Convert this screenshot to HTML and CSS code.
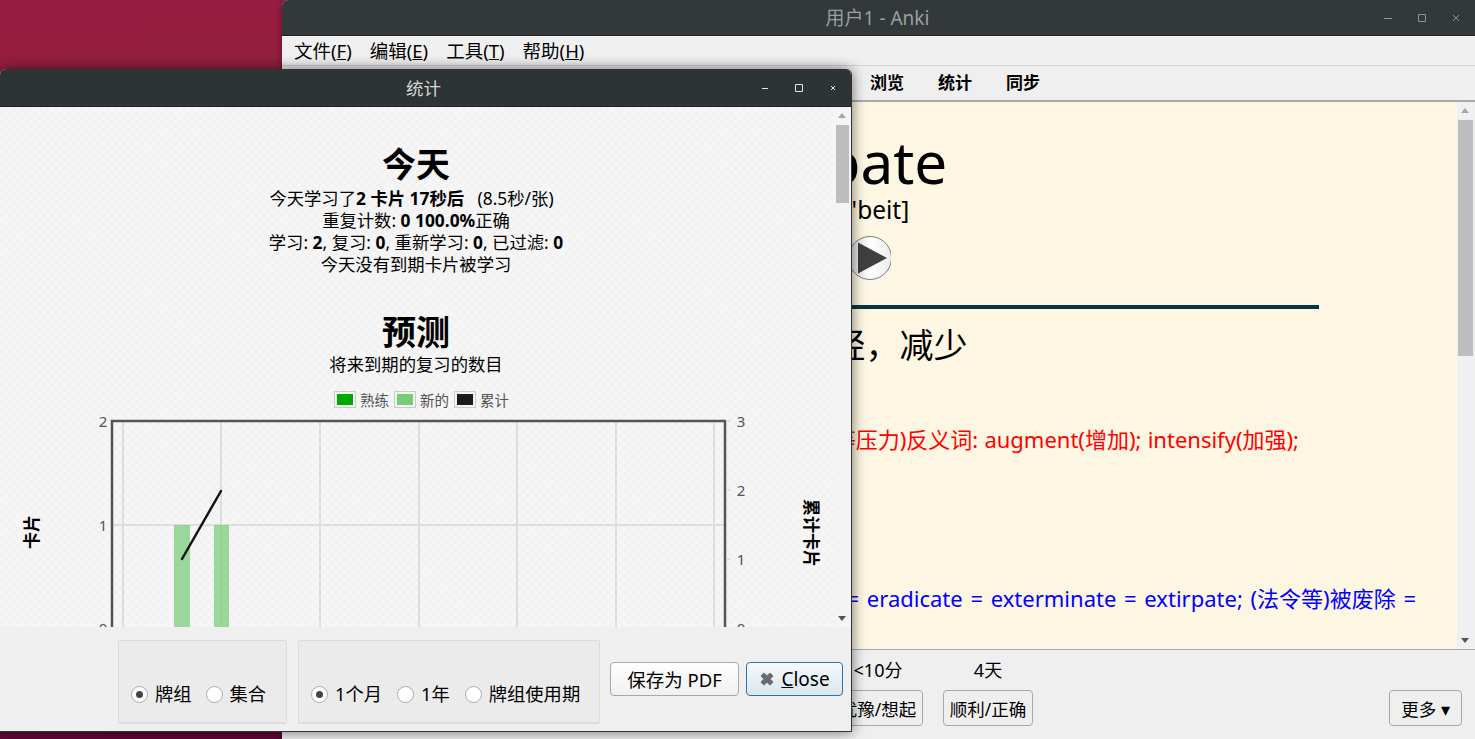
FILE: index.html
```html
<!DOCTYPE html>
<html lang="zh-CN">
<head>
    <meta charset="UTF-8">
    <meta name="viewport" content="width=device-width, initial-scale=1.0">
    <title>Anki</title>
    <link rel="stylesheet" href="styles.css">
</head>
<body>
    <!-- Main Anki window -->
    <div class="window main-window">
        <div class="titlebar main-titlebar">
            <span class="title">用户1 - Anki</span>
            <div class="win-buttons main-buttons">
                <svg width="8" height="8" viewBox="0 0 8 8"><path d="M0 4.500h8" stroke="currentColor" fill="none"/></svg>
                <svg width="8" height="8" viewBox="0 0 8 8"><path d="M.5.5h7v7h-7z" stroke="currentColor" fill="none"/></svg>
                <svg width="8" height="8" viewBox="0 0 8 8"><path d="M1 1l6 6M7 1l-6 6" stroke="currentColor" fill="none"/></svg>
            </div>
        </div>
        <div class="menubar">
            <span>文件(<u>F</u>)</span>
            <span>编辑(<u>E</u>)</span>
            <span>工具(<u>T</u>)</span>
            <span>帮助(<u>H</u>)</span>
        </div>
        <div class="toolbar">
            <span>牌组</span>
            <span>添加</span>
            <span>浏览</span>
            <span>统计</span>
            <span>同步</span>
        </div>
        <div class="card-area">
            <div class="card">
                <div class="word">abate</div>
                <div class="phonetic">[ə'beit]</div>
                <div class="play">
                    <svg width="42" height="46" viewBox="0 0 42 46">
                        <defs>
                            <linearGradient id="playFill" x1="0" x2="1" y1="0" y2="0">
                                <stop offset="0" stop-color="#d8d8d8"/>
                                <stop offset="0.5" stop-color="#ffffff"/>
                                <stop offset="1" stop-color="#ececec"/>
                            </linearGradient>
                        </defs>
                        <circle cx="21" cy="23" r="21.500" fill="url(#playFill)" stroke="#7d7d7d"/>
                        <path d="M9 7.500L38 23L9 38.500z" fill="#404040"/>
                    </svg>
                </div>
                <hr class="divider">
                <div class="meaning">v. 减轻，减少</div>
                <div class="example red">(痛苦等压力)反义词: augment(增加); intensify(加强);</div>
                <div class="example blue">消灭 = eradicate = exterminate = extirpate; (法令等)被废除 =</div>
            </div>
            <div class="scrollbar main-scroll">
                <i class="arrow-up"></i>
                <div class="thumb"></div>
                <i class="arrow-down"></i>
            </div>
        </div>
        <div class="answer-bar">
            <div></div>
            <div class="answers">
                <div class="answer"><span class="due">&lt;1分</span><button class="btn">重来/忘记</button></div>
                <div class="answer"><span class="due">&lt;10分</span><button class="btn">犹豫/想起</button></div>
                <div class="answer"><span class="due">4天</span><button class="btn">顺利/正确</button></div>
            </div>
            <div class="more-wrap"><button class="btn more">更多 ▾</button></div>
        </div>
    </div>

    <!-- Statistics dialog -->
    <div class="window stats-window">
        <div class="titlebar stats-titlebar">
            <span class="title">统计</span>
            <div class="win-buttons stats-buttons">
                <svg width="8" height="8" viewBox="0 0 8 8"><path d="M1 4.500h6" stroke="currentColor" fill="none"/></svg>
                <svg width="8" height="8" viewBox="0 0 8 8"><path d="M.5.5h7v7h-7z" stroke="currentColor" stroke-width="1" fill="none"/></svg>
                <svg width="8" height="8" viewBox="0 0 8 8"><path d="M2 2l4 4M6 2l-4 4" stroke="currentColor" fill="none"/></svg>
            </div>
        </div>
        <div class="stats-view">
            <div class="stats-page">
                <h1>今天</h1>
                <p>今天学习了<b>2 卡片 17秒后</b>&nbsp;&nbsp;&nbsp;(8.5秒/张)&nbsp;&nbsp;</p>
                <p>重复计数: <b>0 100.0%</b>正确</p>
                <p>学习: <b>2</b>, 复习: <b>0</b>, 重新学习: <b>0</b>, 已过滤: <b>0</b></p>
                <p>今天没有到期卡片被学习</p>
                <h1 class="second">预测</h1>
                <p>将来到期的复习的数目</p>
                <div class="legend">
                    <span class="swatch"><i class="mature"></i></span><span>熟练</span>
                    <span class="swatch"><i class="young"></i></span><span>新的</span>
                    <span class="swatch"><i class="total"></i></span><span>累计</span>
                </div>
                <svg class="chart" width="832" height="230" viewBox="0 0 832 230">
                    <g class="grid">
                        <path d="M123 21V230M221 21V230M320 21V230M419 21V230M517 21V230M616 21V230M714 21V230M113 125H724"/>
                    </g>
                    <rect class="bar" x="174" y="125" width="16" height="105"/>
                    <rect class="bar" x="214" y="125" width="15" height="105"/>
                    <path class="frame" d="M112 230V21H725V230"/>
                    <path class="ticks" d="M726 90h5M726 159h5M726 21h5"/>
                    <path class="cumulative" d="M182 159L221 91"/>
                    <g class="axis-text">
                        <text x="103" y="27" text-anchor="middle">2</text>
                        <text x="103" y="131" text-anchor="middle">1</text>
                        <text x="103" y="234" text-anchor="middle">0</text>
                        <text x="741" y="27" text-anchor="middle">3</text>
                        <text x="741" y="96" text-anchor="middle">2</text>
                        <text x="741" y="165" text-anchor="middle">1</text>
                        <text x="741" y="234" text-anchor="middle">0</text>
                    </g>
                    <text class="axis-title" transform="translate(38 132) rotate(-90)" text-anchor="middle">卡片</text>
                    <text class="axis-title" transform="translate(805 133) rotate(90)" text-anchor="middle">累计卡片</text>
                </svg>
            </div>
            <div class="scrollbar stats-scroll">
                <i class="arrow-up"></i>
                <div class="thumb"></div>
                <i class="arrow-down"></i>
            </div>
        </div>
        <div class="stats-footer">
            <div class="group group-scope">
                <label class="radio"><i class="dot on"></i>牌组</label>
                <label class="radio"><i class="dot"></i>集合</label>
            </div>
            <div class="group group-range">
                <label class="radio"><i class="dot on"></i>1个月</label>
                <label class="radio"><i class="dot"></i>1年</label>
                <label class="radio"><i class="dot"></i>牌组使用期</label>
            </div>
            <button class="btn save-btn">保存为 PDF</button>
            <button class="btn close-btn">
                <svg width="16" height="16" viewBox="0 0 16 16"><path d="M2.500 5L5 2.500L8 5.500L11 2.500L13.500 5L10.500 8L13.500 11L11 13.500L8 10.500L5 13.500L2.500 11L5.500 8z" fill="#6a6a6a" stroke="#6a6a6a" stroke-width="1.500" stroke-linejoin="round"/></svg>
                <span><u>C</u>lose</span>
            </button>
        </div>
    </div>
</body>
</html>
```

FILE: styles.css
```css
html, body {
    height: 100%;
}

body {
    margin: 0;
    overflow: hidden;
    position: relative;
    font-family: "Noto Sans", "Noto Sans CJK SC", sans-serif;
    color: #000;
    background: linear-gradient(175deg, #981b43 0%, #93203c 12%, #5a0536 95%);
}

.window {
    position: absolute;
    display: flex;
    flex-direction: column;
    background-color: #efefef;
}

.main-window {
    left: 282px;
    top: 0;
    width: 1193px;
    height: 739px;
    border-radius: 6px 0 0 0;
    overflow: hidden;
    box-shadow: 0 0 6px rgba(0, 0, 0, 0.4);
}

.stats-window {
    left: 0;
    top: 69px;
    width: 852px;
    height: 663px;
    border-radius: 6px 6px 0 0;
    overflow: hidden;
    box-shadow: 0 0 14px rgba(0, 0, 0, 0.55);
    border-right: 1px solid #333;
    border-bottom: 1px solid #333;
    box-sizing: border-box;
}

.titlebar {
    display: flex;
    align-items: center;
    justify-content: center;
    position: relative;
    flex: none;
    border-bottom: 1px solid #1e2223;
    box-sizing: border-box;
}

.main-titlebar {
    height: 36px;
    padding: 0 2px 2px 0;
    color: #9b9fa0;
    font-size: 19px;
    background-color: #33393b;
}

.stats-titlebar {
    height: 38px;
    padding-right: 4px;
    color: #d6d8d8;
    font-size: 17.500px;
    background-color: #2e3436;
}

.win-buttons {
    position: absolute;
    top: 0;
    bottom: 0;
    display: flex;
    align-items: center;
}

.main-buttons {
    right: 15px;
    gap: 26px;
    color: #8f9394;
}

.stats-buttons {
    right: 14px;
    gap: 26px;
    color: #e4e6e6;
}

.menubar {
    display: flex;
    flex: none;
    height: 30px;
    gap: 18px;
    padding: 0 0 2px 12px;
    align-items: center;
    font-size: 18.500px;
    background-color: #f0f0f0;
    border-bottom: 1px solid #d4d4d4;
    box-sizing: border-box;
}

.toolbar {
    display: flex;
    flex: none;
    height: 36px;
    gap: 34px;
    padding: 0 0 3px 17px;
    justify-content: center;
    align-items: center;
    font-size: 17px;
    font-weight: bold;
    background-color: #efefef;
    border-bottom: 2px solid #a8a8a8;
    box-sizing: border-box;
}

.card-area {
    display: flex;
    flex: none;
    height: 547px;
    background-color: #fdf6e3;
    overflow: hidden;
}

.card {
    flex: 1;
    text-align: center;
    min-width: 0;
}

.word {
    font-size: 58.500px;
    line-height: 76px;
    margin-top: 21px;
}

.phonetic {
    font-size: 24.500px;
    line-height: 32px;
    margin-top: -5px;
}

.play {
    height: 46px;
    margin-top: 9px;
}

.divider {
    width: 898px;
    height: 4px;
    margin: 24px auto 0;
    border: none;
    background-color: #073642;
}

.meaning {
    font-size: 34px;
    line-height: 48px;
    margin-top: 12px;
    padding-right: 8px;
}

.example {
    font-size: 22px;
    line-height: 30px;
    white-space: nowrap;
    text-align: right;
}

.red {
    color: #f00;
    margin-top: 55px;
    padding-right: 158px;
    word-spacing: 0.500px;
}

.blue {
    color: #00f;
    margin-top: 129px;
    padding-right: 41px;
    word-spacing: 2px;
}

.scrollbar {
    position: relative;
    flex: none;
    background-color: #f0f0f0;
}

.main-scroll {
    width: 18px;
}

.stats-scroll {
    width: 16px;
    background-color: #f4f4f4;
}

.thumb {
    position: absolute;
    left: 1px;
    right: 2px;
    background-color: #bdbdbd;
}

.main-scroll .thumb {
    top: 18px;
    height: 236px;
}

.stats-scroll .thumb {
    top: 18px;
    height: 78px;
}

.arrow-up, .arrow-down {
    position: absolute;
    left: 4px;
    border-left: 4px solid transparent;
    border-right: 4px solid transparent;
}

.arrow-up {
    top: 6px;
    border-bottom: 5px solid #a6a6a6;
}

.arrow-down {
    bottom: 6px;
    border-top: 5px solid #555;
}

.stats-scroll .arrow-up, .stats-scroll .arrow-down {
    left: 3px;
}

.answer-bar {
    display: grid;
    grid-template-columns: 1fr auto 1fr;
    flex: 1;
    background-color: #efefef;
    border-top: 1px solid #a8a8a8;
}

.answers {
    display: flex;
    padding-right: 1px;
}

.answer {
    display: flex;
    flex-direction: column;
    align-items: center;
    width: 110px;
}

.due {
    font-size: 18px;
    line-height: 22px;
    margin-top: 9px;
}

.btn {
    font-family: inherit;
    font-size: 17.500px;
    color: #000;
    background-color: #efefef;
    border: 1px solid #a8a8a8;
    border-radius: 4px;
    padding: 0;
}

.answer .btn {
    width: 90px;
    height: 36px;
    margin-top: 9px;
}

.more-wrap {
    display: flex;
    justify-content: flex-end;
    align-items: flex-start;
    padding-right: 13px;
}

.more {
    width: 73px;
    height: 36px;
    margin-top: 40px;
}

.stats-view {
    display: flex;
    flex: none;
    height: 520px;
    background-color: #f2f2f2;
    background-image:
        repeating-linear-gradient(45deg, rgba(255, 255, 255, 0.25) 0 2px, transparent 2px 6px),
        repeating-linear-gradient(-45deg, rgba(255, 255, 255, 0.25) 0 2px, transparent 2px 6px);
    overflow: hidden;
}

.stats-page {
    width: 832px;
    flex: none;
    margin-right: 3px;
    text-align: center;
    overflow: hidden;
}

h1 {
    font-size: 34px;
    line-height: 45px;
    margin: 35px 0 0;
}

h1.second {
    margin-top: 36px;
    line-height: 42px;
}

.stats-page p {
    font-size: 17.330px;
    line-height: 22px;
    margin: 0;
}

.legend {
    display: flex;
    justify-content: center;
    align-items: center;
    gap: 4px;
    margin-top: 13px;
    padding-left: 12px;
    height: 22px;
    font-size: 14.500px;
    color: #545454;
}

.legend span:not(.swatch) {
    margin-right: 1px;
}

.swatch {
    display: block;
    padding: 2px;
    border: 1px solid #ccc;
}

.swatch i {
    display: block;
    width: 16px;
    height: 11px;
}

.mature { background-color: #00a800; }
.young { background-color: #77cc77; }
.total { background-color: #1a1a1a; }

.chart {
    display: block;
    margin-top: -10px;
}

.grid path {
    fill: none;
    stroke: rgba(0, 0, 0, 0.09);
    stroke-width: 2;
}

.bar {
    fill: #77cc77;
    opacity: 0.72;
}

.frame {
    fill: none;
    stroke: #545454;
    stroke-width: 2.500;
}

.ticks {
    fill: none;
    stroke: #dcdcdc;
    stroke-width: 1.500;
}

.cumulative {
    fill: none;
    stroke: #151515;
    stroke-width: 2.500;
    stroke-linecap: round;
}

.axis-text text {
    font-size: 15px;
    fill: #545454;
}

.axis-title {
    font-size: 17px;
    font-weight: bold;
    fill: #000;
}

.stats-footer {
    display: flex;
    align-items: flex-start;
    flex: 1;
    padding: 13px 8px 0 118px;
    background-color: #efefef;
}

.group {
    display: flex;
    align-items: flex-end;
    gap: 14px;
    height: 84px;
    padding: 0 12px 15px;
    box-sizing: border-box;
    background-color: #ebebeb;
    border: 1px solid #dcdcdc;
    border-bottom-width: 2px;
    border-radius: 2px;
}

.group-scope {
    width: 169px;
}

.group-range {
    width: 302px;
    margin-left: 11px;
    gap: 15px;
}

.radio {
    display: flex;
    align-items: center;
    gap: 7px;
    font-size: 18.300px;
    line-height: 26px;
}

.dot {
    display: block;
    position: relative;
    flex: none;
    width: 15px;
    height: 15px;
    border: 1px solid #aaa;
    border-radius: 50%;
    background-color: #fff;
}

.dot.on::after {
    content: "";
    position: absolute;
    left: 4px;
    top: 4px;
    width: 7px;
    height: 7px;
    border-radius: 50%;
    background-color: #444;
}

.stats-footer .btn {
    height: 34px;
    margin-top: 22px;
    font-size: 18.500px;
}

.stats-footer .close-btn {
    font-size: 19px;
}

.save-btn {
    width: 129px;
    margin-left: 10px;
    background: linear-gradient(#fff, #f0f0f0);
}

.close-btn {
    display: flex;
    align-items: center;
    justify-content: center;
    gap: 6px;
    width: 97px;
    margin-left: 7px;
    border-color: #2f74a8;
    background: linear-gradient(#f6f9fb, #dbe6ee);
}
```
